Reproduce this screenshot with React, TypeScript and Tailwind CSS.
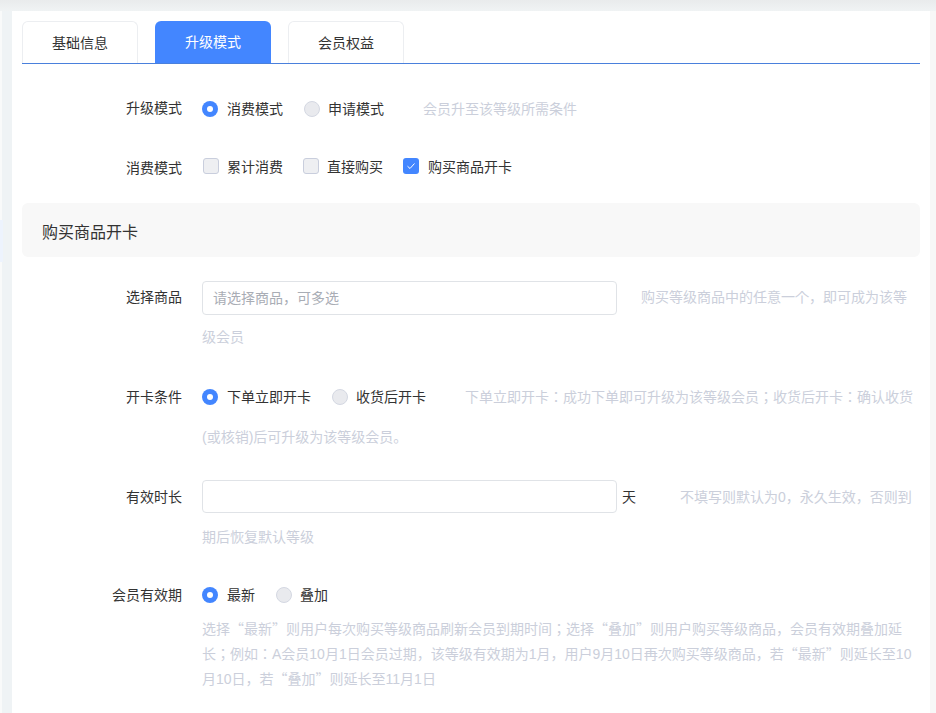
import React from "react";

function Radio({ label, checked, className = "" }: { label: string; checked?: boolean; className?: string }) {
  return (
    <span className={`inline-flex items-center align-top h-10 ${className}`}>
      {checked ? (
        <span className="w-4 h-4 rounded-full bg-[#4386ff] flex items-center justify-center">
          <span className="w-1.5 h-1.5 rounded-full bg-white" />
        </span>
      ) : (
        <span className="w-4 h-4 rounded-full bg-[#e9eaee] border border-[#d4d8e2]" />
      )}
      <span className={`${checked ? "ml-[9px]" : "ml-2"} text-[#333]`}>{label}</span>
    </span>
  );
}

function Check({ label, checked, className = "" }: { label: string; checked?: boolean; className?: string }) {
  return (
    <span className={`inline-flex items-center align-top h-10 -mt-0.5 ${className}`}>
      {checked ? (
        <span className="w-4 h-4 rounded-[3px] bg-[#4386ff] flex items-center justify-center">
          <svg width="10" height="10" viewBox="0 0 10 10" fill="none" stroke="white" strokeWidth="1">
            <path d="M1.5 5.2 L4 7.5 L8.5 2.5" />
          </svg>
        </span>
      ) : (
        <span className="w-4 h-4 rounded-[3px] bg-[#eeeff2] border border-[#c9cedd]" />
      )}
      <span className={`${checked ? "ml-[9px]" : "ml-2"} mt-0.5 text-[#333]`}>{label}</span>
    </span>
  );
}

function Row({ label, children, className = "" }: { label: string; children: React.ReactNode; className?: string }) {
  return (
    <div className={`flex ${className}`}>
      <div className="w-[160px] shrink-0 text-right text-[#333] leading-10">{label}</div>
      <div className="ml-5 w-[715px] leading-10">{children}</div>
    </div>
  );
}

function Hint({ children, className = "" }: { children: React.ReactNode; className?: string }) {
  return <span className={`text-[#cbcfdb] font-['Liberation_Sans','Noto_Sans_CJK_KR',sans-serif] ${className}`}>{children}</span>;
}

function Q({ children }: { children: React.ReactNode }) {
  return <span className="font-['Noto_Sans_CJK_SC',sans-serif]">“{children}”</span>;
}

function Tab({ label, active }: { label: string; active?: boolean }) {
  return (
    <div
      className={
        active
          ? "w-[116px] h-[42px] rounded-t-md bg-[#4386ff] text-white flex items-center justify-center"
          : "w-[116px] h-[42px] rounded-t-md border border-b-0 border-[#eceef1] bg-white text-[#333] flex items-center justify-center"
      }
    >
      {label}
    </div>
  );
}

export default function App() {
  return (
    <div className="relative w-[936px] h-[713px] overflow-hidden bg-white text-sm font-['Liberation_Sans','Noto_Sans_CJK_SC',sans-serif]">
      <div className="h-[11px] bg-gradient-to-b from-[#e9ebec] to-[#f0f3f4]" />
      <div className="flex h-[702px]">
        <div className="w-0.5 bg-[#f9fafa]" />
        <div className="w-2.5 bg-[#eff3f5]" />
        <div className="w-[918px] bg-white pt-2.5 pl-2.5 pr-2.5">
          <div className="flex gap-[17px] border-b border-[#4a80dc] h-[43px]">
            <Tab label="基础信息" />
            <Tab label="升级模式" active />
            <Tab label="会员权益" />
          </div>
          <div className="pt-6">
            <Row label="升级模式" className="mb-[19px]">
              <span className="inline-block align-top pt-px h-10">
                <Radio label="消费模式" checked />
                <Radio label="申请模式" className="ml-[21px]" />
              </span>
              <Hint className="ml-[39px] align-[-1px]">会员升至该等级所需条件</Hint>
            </Row>
            <Row label="消费模式" className="mb-[15px]">
              <Check label="累计消费" className="ml-px" />
              <Check label="直接购买" className="ml-5" />
              <Check label="购买商品开卡" checked className="ml-5" />
            </Row>
            <div className="w-[898px] h-[54px] rounded-md bg-[#f8f8f8] pl-5 pt-1.5 text-base text-[#333] flex items-center mb-5">
              购买商品开卡
            </div>
            <Row label="选择商品" className="mb-5">
              <span className="inline-flex items-center w-[415px] h-[34px] mt-1 rounded border border-[#e0e3e7] px-2.5 text-[#a9adb5] align-top leading-none font-['Liberation_Sans','Noto_Sans_CJK_KR',sans-serif]">
                请选择商品，可多选
              </span>
              <Hint className="ml-6">购买等级商品中的任意一个，即可成为该等级会员</Hint>
            </Row>
            <Row label="开卡条件" className="mb-5">
              <Radio label="下单立即开卡" checked />
              <Radio label="收货后开卡" className="ml-[21px]" />
              <Hint className="ml-[39px]">下单立即开卡：成功下单即可升级为该等级会员；收货后开卡：确认收货(或核销)后可升级为该等级会员。</Hint>
            </Row>
            <Row label="有效时长" className="mb-[18px]">
              <span className="inline-block w-[415px] h-[33px] mt-[3px] rounded border border-[#e0e3e7] align-top" />
              <span className="ml-[5px] text-[#333]">天</span>
              <Hint className="ml-[44px]">不填写则默认为0，永久生效，否则到期后恢复默认等级</Hint>
            </Row>
            <Row label="会员有效期">
              <Radio label="最新" checked />
              <Radio label="叠加" className="ml-[21px]" />
              <div className="mt-px text-[#cbcfdb] leading-6 font-['Liberation_Sans','Noto_Sans_CJK_KR',sans-serif]">
                选择<Q>最新</Q>则用户每次购买等级商品刷新会员到期时间；选择<Q>叠加</Q>则用户购买等级商品，会员有效期叠加延长；例如：A会员10月1日会员过期，该等级有效期为1月，用户9月10日再次购买等级商品，若<Q>最新</Q>则延长至10月10日，若<Q>叠加</Q>则延长至11月1日
              </div>
            </Row>
          </div>
        </div>
        <div className="flex-1 bg-[#f7f7f7]" />
      </div>
      <div className="absolute left-0 top-[220px] w-[3px] h-[42px] bg-[#edf3fd]" />
    </div>
  );
}
